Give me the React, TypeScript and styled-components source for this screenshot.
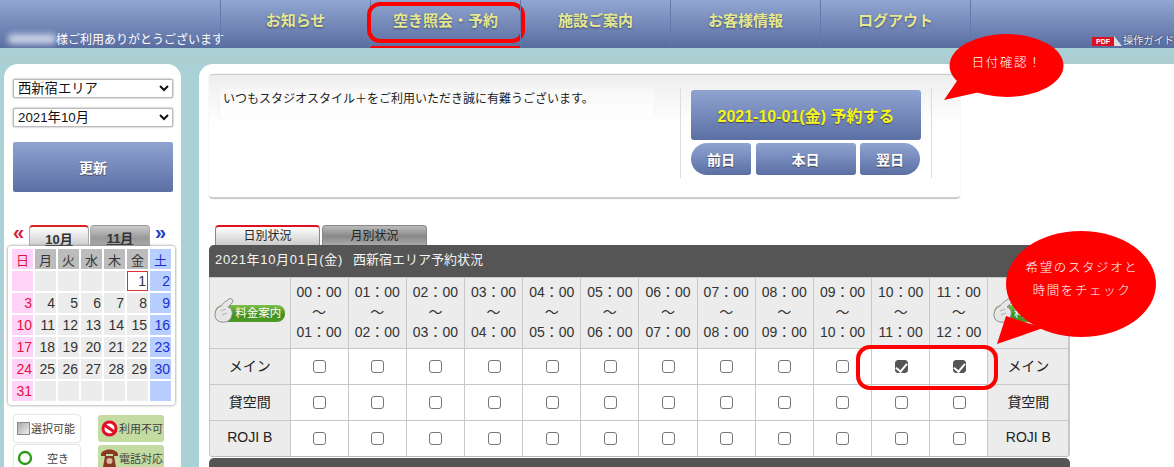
import React from "react";
import styled, { createGlobalStyle } from "styled-components";

const FONT = `"Liberation Sans", "Noto Sans CJK JP", sans-serif`;
const BLUE = "linear-gradient(#90a4d2, #5a6fa3)";

const Global = createGlobalStyle`
  html, body { margin: 0; padding: 0; height: 467px; overflow: hidden; background: #a9d1d6; }
  body { font-family: ${FONT}; color: #222; }
  * { box-sizing: border-box; }
`;

const Page = styled.div`
  position: relative;
  width: 1174px;
  height: 467px;
  overflow: hidden;
`;

/* header */
const Header = styled.header`
  display: flex;
  height: 48px;
  background: linear-gradient(#92a6d3, #5a6ea1);
  border-bottom: 1px solid #55709c;
`;
const Greeting = styled.div`
  width: 220px;
  flex: none;
  padding: 30px 0 0 8px;
  display: flex;
  align-items: center;
  height: 47px;
  color: #fff;
  font-size: 12px;
  white-space: nowrap;
`;
const BlurredName = styled.span`
  width: 48px;
  height: 10px;
  flex: none;
  background: #c9d3e8;
  border-radius: 4px;
  filter: blur(3px);
`;
const NavItem = styled.a<{ $active?: boolean }>`
  position: relative;
  width: 150px;
  height: 47px;
  flex: none;
  display: flex;
  align-items: flex-start;
  justify-content: center;
  padding-top: 9px;
  border-left: 1px solid #6379ae;
  color: #e6e88f;
  font-size: 15px;
  font-weight: 700;
  text-shadow: 0 1px 2px #3f4f7d;
  ${(p) => p.$active && `border-bottom: 2px solid #f00; height: 48px;`}
`;
const NavLast = styled.div`
  flex: 1;
  position: relative;
  border-left: 1px solid #6379ae;
`;
const NavHighlight = styled.span`
  position: absolute;
  left: -4px;
  top: 2px;
  width: 158px;
  height: 41px;
  border: 4px solid #f00;
  border-radius: 13px;
`;
const GuideLink = styled.div`
  position: absolute;
  left: 121px;
  top: 34px;
  display: flex;
  align-items: center;
  color: #eee;
  font-size: 10.2px;
  line-height: 14px;
  white-space: nowrap;
  text-shadow: 0 0 2px #223;
`;
const PdfBadge = styled.span`
  width: 22px;
  height: 9px;
  background: #dc1020;
  color: #fff;
  font-size: 7px;
  line-height: 9px;
  text-align: center;
  text-shadow: none;
  font-weight: 700;
`;
const PdfFold = styled.svg`
  flex: none;
  margin-right: 1px;
`;

/* body */
const Body = styled.div`
  display: flex;
  gap: 18px;
  height: 419px;
  padding: 16px 0 0 4px;
  background: linear-gradient(#a9d2d8, #aeccd0 16px, #a9d1d6 17px);
`;
const Sidebar = styled.aside`
  width: 177px;
  flex: none;
  background: #fff;
  border-radius: 14px 14px 0 0;
  padding: 15px 4px 0;
`;
const Select = styled.select`
  display: block;
  width: 160px;
  height: 19px;
  margin: 0 0 10px 5px;
  padding: 0;
  font: 13.3px ${FONT};
  color: #111;
  background: #fff;
  border: 1px solid #bbb;
  border-radius: 2px;
  box-shadow: 0 0 2px #888;
`;
const UpdateButton = styled.button`
  display: block;
  width: 160px;
  height: 50px;
  margin: 15px 0 33px 5px;
  border: 0;
  border-radius: 2px;
  background: ${BLUE};
  color: #fff;
  font: 700 14px ${FONT};
  text-shadow: 0 1px 1px #445;
`;
const CalTabs = styled.div`
  display: flex;
  align-items: flex-start;
  height: 21px;
  padding-left: 1px;
`;
const Arrow = styled.span<{ $color: string }>`
  width: 12px;
  flex: none;
  margin: 0 4px;
  color: ${(p) => p.$color};
  font-size: 20px;
  font-weight: 700;
  line-height: 14px;
`;
const CalTab = styled.span<{ $active?: boolean }>`
  width: 60px;
  height: 22px;
  flex: none;
  margin-right: 1px;
  text-align: center;
  font-size: 13px;
  font-weight: 700;
  line-height: 25px;
  color: #333;
  text-decoration: underline;
  border-radius: 4px 4px 0 0;
  border: 1px solid #aaa;
  ${(p) =>
    p.$active
      ? `background: linear-gradient(#fff,#ccc); border-top: 2px solid #d22;`
      : `background: linear-gradient(#ccc,#999 60%,#aaa); border-top: 1px solid #999;`}
`;
const Calendar = styled.div`
  position: relative;
  width: 167px;
  height: 159px;
  background: #fff;
  border-radius: 3px;
  box-shadow: 0 0 3px #777;
  padding: 3px 4px;
  display: grid;
  grid-template-columns: repeat(7, 21px);
  grid-auto-rows: 20px;
  column-gap: 2px;
  row-gap: 2px;
`;
const CalCell = styled.div<{ $kind: string; $head?: boolean; $today?: boolean }>`
  display: flex;
  align-items: center;
  justify-content: ${(p) => (p.$head ? "center" : "flex-end")};
  font-size: ${(p) => (p.$head ? "13px" : "14px")};
  padding-right: ${(p) => (p.$head ? 0 : "1px")};
  background: ${(p) =>
    p.$today ? "#fff" : p.$kind === "sun" ? "#ffd3f8" : p.$kind === "sat" ? "#b7ceff" : p.$head ? "#bcbcbc" : "#ececec"};
  color: ${(p) => (p.$kind === "sun" ? "#e3123c" : p.$kind === "sat" ? "#1a2fd0" : "#333")};
  ${(p) => p.$today && `border: 1px solid #d33;`}
`;
const Legend = styled.div`
  display: grid;
  grid-template-columns: 66px 66px;
  grid-auto-rows: 27px;
  column-gap: 18px;
  row-gap: 3px;
  margin: 10px 0 0 6px;
`;
const LegendItem = styled.div<{ $green?: boolean; $center?: boolean }>`
  display: flex;
  align-items: center;
  gap: ${(p) => (p.$center ? "14px" : "1px")};
  padding: 0 0 1px 3px;
  font-size: 11px;
  color: #444;
  white-space: nowrap;
  border-radius: 3px;
  ${(p) => (p.$green ? `background: #c4dba2;` : `background: #fff; box-shadow: 0 0 2px #aaa;`)}
`;
const LegendBox = styled.span`
  width: 13px;
  height: 13px;
  flex: none;
  border: 1px solid #888;
  background: linear-gradient(135deg, #aaa, #eee);
`;

/* main */
const Main = styled.main`
  flex: 1;
  background: #fff;
  border-radius: 14px 0 0 0;
  padding: 10px 0 0 10px;
`;
const Card = styled.section`
  display: flex;
  width: 751px;
  height: 125px;
  padding: 13px 28px 0 10px;
  background: linear-gradient(#eee, #fff 50px);
  border-top: 1px solid #ccc;
  border-bottom: 2px solid #ccc;
  border-radius: 4px;
  box-shadow: 0 0 1px #bbb;
`;
const Message = styled.div`
  width: 436px;
  height: 30px;
  padding: 3px;
  font-size: 12px;
  line-height: 15px;
  color: #222;
  white-space: nowrap;
  border-radius: 4px;
  border: 1px solid #f4f4f4;
  border-bottom: 0;
  background: linear-gradient(#f8f8f8, #fff);
`;
const ActionBox = styled.div`
  margin-left: 25px;
  width: 252px;
  height: 90px;
  padding: 2px 10px 0;
  border-left: 1px solid #ddd;
  border-right: 1px solid #ddd;
`;
const ReserveButton = styled.button`
  display: block;
  width: 230px;
  height: 50px;
  margin-bottom: 3px;
  border: 0;
  border-radius: 3px;
  background: ${BLUE};
  color: #f6f61a;
  font: 700 16px ${FONT};
  text-shadow: 0 1px 1px #445;
`;
const DayRow = styled.div`
  display: flex;
  gap: 4.5px;
`;
const DayButton = styled.button<{ $w: number; $r?: string }>`
  width: ${(p) => p.$w}px;
  height: 32px;
  border: 0;
  padding: 0;
  border-radius: ${(p) => p.$r || "3px"};
  background: ${BLUE};
  color: #fff;
  font: 700 14px ${FONT};
  text-shadow: 0 1px 1px #445;
`;
const Tabs = styled.div`
  display: flex;
  gap: 2px;
  height: 20px;
  margin: 26px 0 0 6px;
`;
const Tab = styled.span<{ $active?: boolean }>`
  width: 105px;
  text-align: center;
  font-size: 12px;
  line-height: 21px;
  color: #222;
  border: 1px solid #888;
  border-bottom: 0;
  border-radius: 4px 4px 0 0;
  ${(p) =>
    p.$active
      ? `background: linear-gradient(#fff, #ccc); border-top: 2px solid #e01020; line-height: 19px;`
      : `background: linear-gradient(#bbb, #888 55%, #aaa);`}
`;
const TitleBar = styled.div`
  width: 861px;
  height: 32px;
  padding: 0 6px;
  background: #555;
  color: #f4f4f4;
  font-size: 13px;
  line-height: 30px;
  border-radius: 5px 5px 0 0;
  white-space: pre;
`;
const TitleDate = styled.span`
  letter-spacing: 0.67px;
  margin-right: 3px;
`;
const Schedule = styled.div`
  display: grid;
  grid-template-columns: 80.5px repeat(12, 58.17px) 81px;
  grid-template-rows: 71px repeat(3, 36px);
  width: 861px;
  background: #c8c8c8;
  border-bottom: 1px solid #bbb;
  border-radius: 0 0 4px 4px;
  overflow: hidden;
`;
const Cell = styled.div<{ $head?: boolean }>`
  display: flex;
  align-items: center;
  justify-content: center;
  background: ${(p) => (p.$head ? "#ececec" : "#fff")};
  border-left: 1px solid #c8c8c8;
  border-top: 1px solid #c8c8c8;
`;
const CheckCell = styled(Cell)`
  padding-left: 1px;
`;
const TimeCell = styled(Cell)`
  flex-direction: column;
  padding-bottom: 2px;
  font-size: 14px;
  line-height: 20px;
  color: #333;
`;
const RowLabel = styled(Cell)`
  padding-bottom: 3px;
  font-size: 14px;
  color: #222;
`;
const PricePill = styled.div`
  position: relative;
  width: 70px;
  height: 17px;
  padding-left: 20px;
  margin-left: 1px;
  border-radius: 8px;
  background: linear-gradient(#7cc04a, #3e8d1c 60%, #4f9d28);
  color: #fff;
  font-size: 11.5px;
  line-height: 17px;
  white-space: nowrap;
`;
const HandIcon = styled.svg`
  position: absolute;
  left: -1px;
  top: -7px;
`;
const Check = styled.input`
  appearance: none;
  position: relative;
  width: 13px;
  height: 13px;
  margin: 0;
  background: #fff;
  border: 1px solid #777;
  border-radius: 3px;
  &:checked {
    background: #555;
    border-color: #555;
  }
  &:checked::after {
    content: "";
    position: absolute;
    left: 2.5px;
    top: -0.5px;
    width: 5px;
    height: 9px;
    border: solid #fff;
    border-width: 0 2px 2px 0;
    transform: rotate(40deg);
  }
`;
const FooterBar = styled.div`
  width: 861px;
  height: 12px;
  margin-top: 1px;
  background: #555;
  border-radius: 5px 5px 0 0;
`;

/* overlays */
const RowHighlight = styled.div`
  position: absolute;
  left: 856px;
  top: 345px;
  width: 142px;
  height: 45px;
  border: 4px solid #f00;
  border-radius: 14px;
`;
const Callout = styled.div<{ $x: number; $y: number; $w: number; $h: number; $textW: number; $textH: number }>`
  position: absolute;
  left: ${(p) => p.$x}px;
  top: ${(p) => p.$y}px;
  width: ${(p) => p.$w}px;
  height: ${(p) => p.$h}px;
  & > div {
    position: absolute;
    right: 0;
    top: 0;
    width: ${(p) => p.$textW}px;
    height: ${(p) => p.$textH}px;
    display: flex;
    flex-direction: column;
    align-items: center;
    justify-content: center;
    color: #fff;
    font-size: 12.5px;
    font-weight: 300;
    letter-spacing: 1.6px;
    line-height: 23px;
  }
  & > svg {
    position: absolute;
    left: 0;
    top: 0;
  }
`;

const heads: [string, string][] = [
  ["日", "sun"], ["月", "d"], ["火", "d"], ["水", "d"], ["木", "d"], ["金", "d"], ["土", "sat"],
];
const days: (number | null)[] = [
  null, null, null, null, null, 1, 2,
  3, 4, 5, 6, 7, 8, 9,
  10, 11, 12, 13, 14, 15, 16,
  17, 18, 19, 20, 21, 22, 23,
  24, 25, 26, 27, 28, 29, 30,
  31, null, null, null, null, null, null,
];
const hh = (n: number) => String(n).padStart(2, "0") + "：00";
const rooms = ["メイン", "貸空間", "ROJI B"];

const Price = ({ label }: { label: string }) => (
  <PricePill>
    {label}
    <HandIcon width="24" height="26" viewBox="0 -1 24 26">
      <path
        d="M1 16 C1 11 4 8 7 7 C8 5 12 2 15 0 C18 -1 20 1 18 4 L14 8 C17 9 19 12 18 16 C17 21 13 24 8 23 C4 23 1 20 1 16 Z"
        fill="#e6e6e6"
        stroke="#8f8f8f"
        strokeWidth="1"
      />
      <path d="M7 12 L12 10 M8 16 L13 14" stroke="#b0b0b0" strokeWidth="1" />
    </HandIcon>
  </PricePill>
);

export default function App() {
  return (
    <Page>
      <Global />
      <Header>
        <Greeting>
          <BlurredName />
          様ご利用ありがとうございます
        </Greeting>
        <NavItem>お知らせ</NavItem>
        <NavItem $active>
          空き照会・予約
          <NavHighlight />
        </NavItem>
        <NavItem>施設ご案内</NavItem>
        <NavItem>お客様情報</NavItem>
        <NavItem>ログアウト</NavItem>
        <NavLast>
          <GuideLink>
            <PdfBadge>PDF</PdfBadge>
            <PdfFold width="8" height="10" viewBox="0 0 8 10">
              <path d="M0 0 L8 10 L0 10 Z" fill="#d8dde8" />
            </PdfFold>
            操作ガイド
          </GuideLink>
        </NavLast>
      </Header>
      <Body>
        <Sidebar>
          <Select defaultValue="a">
            <option value="a">西新宿エリア</option>
          </Select>
          <Select defaultValue="b">
            <option value="b">2021年10月</option>
          </Select>
          <UpdateButton>更新</UpdateButton>
          <CalTabs>
            <Arrow $color="#d8203a">«</Arrow>
            <CalTab $active>10月</CalTab>
            <CalTab>11月</CalTab>
            <Arrow $color="#2040c0">»</Arrow>
          </CalTabs>
          <Calendar>
            {heads.map(([t, k]) => (
              <CalCell key={t} $kind={k} $head>
                {t}
              </CalCell>
            ))}
            {days.map((d, i) => (
              <CalCell
                key={i}
                $kind={i % 7 === 0 ? "sun" : i % 7 === 6 ? "sat" : "d"}
                $today={d === 1}
              >
                {d}
              </CalCell>
            ))}
          </Calendar>
          <Legend>
            <LegendItem>
              <LegendBox />
              選択可能
            </LegendItem>
            <LegendItem $green>
              <svg width="17" height="17" viewBox="0 0 17 17">
                <circle cx="8.5" cy="8.5" r="6.5" fill="#fff" stroke="#e0102a" strokeWidth="3" />
                <path d="M3.5 5 L13.5 12" stroke="#e0102a" strokeWidth="3" />
              </svg>
              利用不可
            </LegendItem>
            <LegendItem $center>
              <svg width="16" height="16" viewBox="0 0 16 16">
                <circle cx="8" cy="8" r="6" fill="none" stroke="#2f9a1a" strokeWidth="2.4" />
              </svg>
              空き
            </LegendItem>
            <LegendItem $green>
              <svg width="17" height="20" viewBox="0 0 17 20">
                <path d="M0 6 C2 0 15 0 17 6 L17 8 L12 8 L12 6 L5 6 L5 8 L0 8 Z" fill="#8a3a20" />
                <path d="M4 8 L13 8 L15 19 L2 19 Z" fill="#8a3a20" />
                <circle cx="8.5" cy="13" r="3" fill="#d8b8a0" />
              </svg>
              電話対応
            </LegendItem>
          </Legend>
        </Sidebar>
        <Main>
          <Card>
            <Message>いつもスタジオスタイル＋をご利用いただき誠に有難うございます。</Message>
            <ActionBox>
              <ReserveButton>2021-10-01(金) 予約する</ReserveButton>
              <DayRow>
                <DayButton $w={60} $r="16px 3px 3px 16px">前日</DayButton>
                <DayButton $w={100}>本日</DayButton>
                <DayButton $w={60} $r="3px 16px 16px 3px">翌日</DayButton>
              </DayRow>
            </ActionBox>
          </Card>
          <Tabs>
            <Tab $active>日別状況</Tab>
            <Tab>月別状況</Tab>
          </Tabs>
          <TitleBar>
            <TitleDate>2021年10月01日(金)</TitleDate>
            {"  西新宿エリア予約状況"}
          </TitleBar>
          <Schedule>
            <Cell $head>
              <Price label="料金案内" />
            </Cell>
            {Array.from({ length: 12 }, (_, i) => (
              <TimeCell key={i} $head>
                <span>{hh(i)}</span>
                <span>〜</span>
                <span>{hh(i + 1)}</span>
              </TimeCell>
            ))}
            <Cell $head>
              <Price label="料金案内" />
            </Cell>
            {rooms.map((room, r) => (
              <React.Fragment key={room}>
                <RowLabel $head>{room}</RowLabel>
                {Array.from({ length: 12 }, (_, i) => (
                  <CheckCell key={i}>
                    <Check type="checkbox" readOnly checked={r === 0 && i >= 10} />
                  </CheckCell>
                ))}
                <RowLabel $head>{room}</RowLabel>
              </React.Fragment>
            ))}
          </Schedule>
          <FooterBar />
        </Main>
      </Body>
      <RowHighlight />
      <Callout $x={944} $y={34} $w={120} $h={66} $textW={114} $textH={58}>
        <svg width="120" height="66" viewBox="0 0 120 66">
          <ellipse cx="62.5" cy="31.5" rx="57" ry="31.5" fill="#fe0000" />
          <path d="M15 44 L0 66 L36 58 Z" fill="#fe0000" />
        </svg>
        <div>
          <span>日付確認！</span>
        </div>
      </Callout>
      <Callout $x={997} $y={231} $w={160} $h={114} $textW={150} $textH={97}>
        <svg width="160" height="114" viewBox="0 0 160 114">
          <ellipse cx="84" cy="53" rx="75" ry="53" fill="#fe0000" />
          <path d="M9 85 L0 113 L46 97 Z" fill="#fe0000" />
        </svg>
        <div>
          <span>希望のスタジオと</span>
          <span>時間をチェック</span>
        </div>
      </Callout>
    </Page>
  );
}
